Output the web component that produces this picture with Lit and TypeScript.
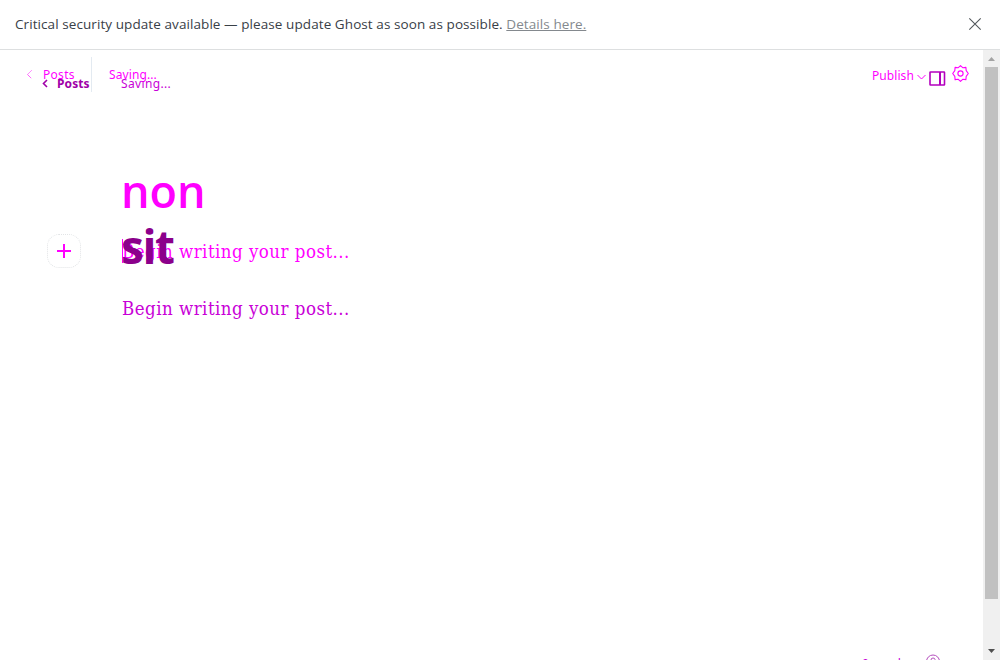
import { LitElement, html, css } from "lit";
import { customElement } from "lit/decorators.js";

@customElement("app-root")
export class AppRoot extends LitElement {
  static styles = css`
    :host { display: flex; flex-direction: column; width: 1000px; height: 660px; overflow: hidden; background: #fff; font-family: "Noto Sans", sans-serif; color: #394047; }
    * { box-sizing: border-box; }
    svg { display: block; flex: none; }
    .banner { flex: none; display: flex; justify-content: space-between; align-items: center; height: 50px; padding: 0 18px 2px 15px; border-bottom: 1px solid #dddfe0; font-family: "Open Sans", sans-serif; font-size: 13.5px; line-height: 20px; white-space: pre; }
    .message { letter-spacing: 0.08px; }
    .link { color: #84898e; text-decoration: underline; }
    .main { flex: 1; min-height: 0; display: flex; }
    .stack { flex: 1; display: grid; grid-template: 610px / 983px; overflow: hidden; }
    .layer { grid-area: 1 / 1; display: flex; flex-direction: column; min-width: 0; white-space: nowrap; }
    .bar { display: flex; font-size: 13px; line-height: 18px; }
    .first { color: #f0f; }
    .first .bar { height: 113px; padding: 7px 14px 0 27px; }
    .first .back { display: flex; width: 65px; height: 35px; padding-top: 9px; gap: 10px; border-right: 1px solid #e3eaf1; font-size: 12px; letter-spacing: 0.3px; }
    .first .back svg { margin-top: 4px; }
    .first .status { margin: 9px auto 0 17px; font-size: 12px; letter-spacing: 0.1px; }
    .publish { display: flex; gap: 3px; margin: 10px 26px 0 0; font-size: 12px; letter-spacing: 0.1px; }
    .publish svg { margin-top: 7px; }
    .gear { margin-top: 8px; }
    .title { font-weight: 600; line-height: 56px; }
    .first .title { height: 71px; padding-left: 121px; font-family: "Open Sans", sans-serif; font-size: 45px; }
    .row { display: flex; align-items: center; height: 34px; padding-left: 47px; }
    .plus { display: flex; align-items: center; justify-content: center; width: 34px; height: 34px; border: 1px dotted #e2e4e6; border-radius: 12px; margin-right: 41px; }
    .prompt { font-family: "DejaVu Serif", serif; font-stretch: condensed; font-size: 18.5px; letter-spacing: 0.48px; line-height: 26px; }
    .row .prompt { height: 24px; box-shadow: inset 1px 0 #f0f; }
    .second { color: #c800d7; }
    .second .bar { height: 168px; padding: 25px 37px 0 42px; font-size: 12px; }
    .second .back { display: flex; gap: 9px; width: 79px; color: #a000a8; font-weight: 700; letter-spacing: 0.1px; }
    .second .back svg { margin-top: 4px; }
    .second .status { margin-right: auto; letter-spacing: 0.35px; }
    .panel { margin-top: -4px; }
    .second .title { height: 78px; padding-left: 121px; color: #8b008b; font-family: "Open Sans", sans-serif; font-size: 46px; letter-spacing: -1.4px; font-weight: 700; }
    .second .prompt { padding-left: 122px; }
    .footer { display: flex; flex: none; margin-top: auto; height: 6px; padding-left: 862px; font-size: 12px; line-height: 18px; overflow: hidden; }
    .footer span { width: 64px; padding-top: 1px; }
    .scroll { width: 17px; flex: none; display: flex; flex-direction: column; align-items: center; padding: 7px 0; background: #f0f0f0; }
    .thumb { width: 13px; height: 532px; margin: 6px 0 auto; background: #c1c1c1; }
  `;

  render() {
    return html`
      <div class="banner">
        <span class="message">Critical security update available — please update Ghost as soon as possible. <span class="link">Details here.</span></span>
        <svg width="14" height="14" viewBox="0 0 14 14" fill="none" stroke="#53585c" stroke-width="1.1"><path d="M1.3 1.3l11.4 11.4M12.7 1.3L1.3 12.7"/></svg>
      </div>
      <div class="main">
        <div class="stack">
          <div class="layer first">
            <div class="bar">
              <div class="back">
                <svg width="6" height="9" viewBox="0 0 6 9" fill="none" stroke="#f0f" stroke-width=".8" stroke-dasharray="1.1 .5"><path d="M4.5.5l-4 4 4 4"/></svg>
                <span>Posts</span>
              </div>
              <span class="status">Saving...</span>
              <div class="publish"><span>Publish</span><svg width="9" height="6" viewBox="0 0 9 6" fill="none" stroke="#f0f"><path d="M.5 1l4 4 4-4"/></svg></div>
              <svg class="gear" width="17" height="17" viewBox="0 0 17 17" fill="none" stroke="#f0f" stroke-width="1.1"><path d="M8.5.7L10.7 2.7 13.9 2.4 14.2 5.7 16.3 8.5 14.2 11.3 13.9 14.6 10.7 14.3 8.5 16.3 6.3 14.3 3.1 14.6 2.8 11.3.7 8.5 2.8 5.7 3.1 2.4 6.3 2.7z" stroke-linejoin="round"/><circle cx="8.5" cy="8.5" r="2.6"/></svg>
            </div>
            <div class="title">non</div>
            <div class="row">
              <div class="plus"><svg width="14" height="14" viewBox="0 0 14 14" stroke="#f0f" stroke-width="2"><path d="M0 7h14M7 0v14"/></svg></div>
              <span class="prompt">Begin writing your post...</span>
            </div>
          </div>
          <div class="layer second">
            <div class="bar">
              <div class="back">
                <svg width="6" height="9" viewBox="0 0 6 9" fill="none" stroke="#a000a8" stroke-width="1.6"><path d="M5 1L1.5 4.5 5 8"/></svg>
                <span>Posts</span>
              </div>
              <span class="status">Saving...</span>
              <svg class="panel" width="17" height="15" viewBox="0 0 17 15" fill="none" stroke="#b400be"><rect x="1" y="1" width="14.5" height="13" rx=".5" stroke-width="1.6"/><path d="M11 1v13" stroke-width="2"/></svg>
            </div>
            <div class="title">sit</div>
            <div class="prompt">Begin writing your post...</div>
            <div class="footer">
              <span>0 words</span>
              <svg width="14" height="14" viewBox="0 0 14 14" fill="none" stroke="#b44fbd"><circle cx="7" cy="7.5" r="6.5"/><path d="M5 6q0-2 2-2t2 1.5q0 1-2 2v1"/></svg>
            </div>
          </div>
        </div>
        <div class="scroll">
          <svg width="7" height="4" viewBox="0 0 7 4" fill="#a3a3a3"><path d="M0 4L3.5 0 7 4z"/></svg>
          <div class="thumb"></div>
          <svg width="7" height="4" viewBox="0 0 7 4" fill="#505050"><path d="M0 0L3.5 4 7 0z"/></svg>
        </div>
      </div>
    `;
  }
}
